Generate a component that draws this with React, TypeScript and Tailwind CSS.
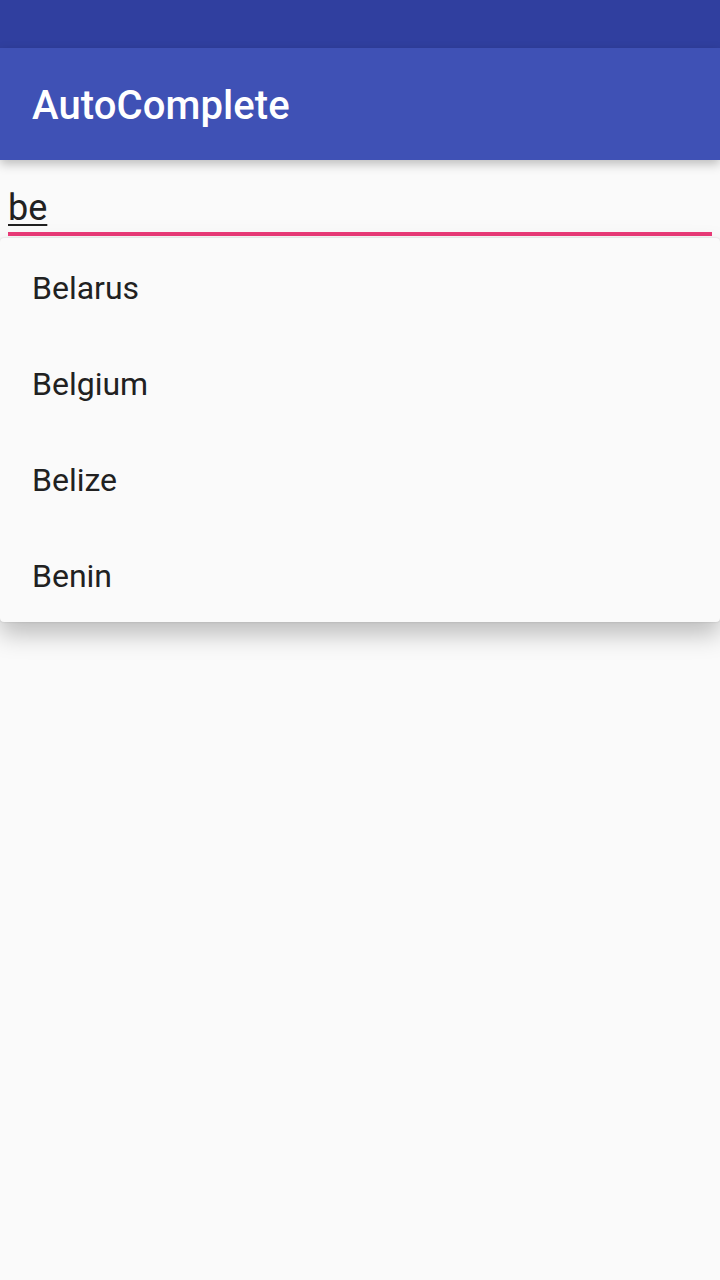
const countries = ['Belarus', 'Belgium', 'Belize', 'Benin']

function App() {
  return (
    <div
      className="min-h-screen w-[720px] bg-[#fafafa] overflow-hidden"
      style={{ fontFamily: 'Roboto, "Noto Sans", sans-serif' }}
    >
      {/* Status bar */}
      <div className="h-[48px] bg-[#303f9f]" />

      {/* Toolbar */}
      <div className="relative z-20 h-[112px] bg-[#3f51b5] flex items-center px-[32px] pt-[4px] shadow-[0_4px_10px_rgba(0,0,0,0.25)]">
        <h1 className="text-white text-[40px] font-medium leading-none tracking-[0.1px]">AutoComplete</h1>
      </div>

      {/* Input + dropdown */}
      <div className="relative">
        <div className="px-[8px] pt-[24px]">
          <div className="h-[46px] flex items-end">
            <span className="text-[36px] leading-none text-[#212121] underline underline-offset-[4px] decoration-[2px] pb-[4px]">be</span>
          </div>
          <div className="h-[4px] bg-[#eb3a78] mt-[2px]" />
        </div>

        <div className="relative z-10 mt-[2px] bg-[#fafafa] rounded-[4px] shadow-[0_0_2px_rgba(0,0,0,0.15),0_12px_24px_rgba(0,0,0,0.25)]">
          {countries.map(name => (
            <div key={name} className="h-[96px] flex items-center px-[32px] pt-[4px]">
              <span className="text-[32px] text-[#212121] leading-none">{name}</span>
            </div>
          ))}
        </div>
      </div>
    </div>
  )
}

export default App
